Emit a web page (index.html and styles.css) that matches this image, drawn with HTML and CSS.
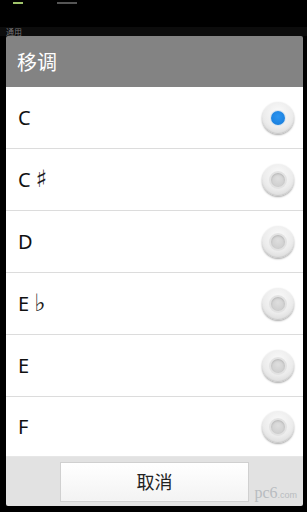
FILE: index.html
```html
<!DOCTYPE html>
<html>
<head>
<meta charset="utf-8">
<link rel="stylesheet" href="styles.css">
</head>
<body>
<div class="status">
  <span class="sig green"></span>
  <span class="sig grey"></span>
</div>
<div class="behind"><span>通用</span></div>
<div class="dialog">
  <div class="title">移调</div>
  <div class="list">
    <div class="row"><span class="label">C</span><span class="radio on"><span class="dot"></span></span></div>
    <div class="row"><span class="label">C <span class="acc">&#9839;&#xFE0E;</span></span><span class="radio"><span class="dot"></span></span></div>
    <div class="row"><span class="label">D</span><span class="radio"><span class="dot"></span></span></div>
    <div class="row"><span class="label">E <span class="acc">&#9837;&#xFE0E;</span></span><span class="radio"><span class="dot"></span></span></div>
    <div class="row"><span class="label">E</span><span class="radio"><span class="dot"></span></span></div>
    <div class="row last"><span class="label">F</span><span class="radio"><span class="dot"></span></span></div>
  </div>
  <div class="footer">
    <div class="btn">取消</div>
    <div class="mark">pc6<small>.com</small></div>
  </div>
</div>
</body>
</html>
```
FILE: styles.css
```css
html, body {
  margin: 0;
  padding: 0;
  background: #000;
  width: 307px;
  height: 512px;
  overflow: hidden;
  font-family: "Noto Sans", "Noto Sans CJK SC", sans-serif;
}
.status {
  height: 27px;
  display: flex;
  align-items: flex-start;
  padding-top: 2px;
  box-sizing: border-box;
}
.sig {
  height: 2px;
  display: block;
}
.green {
  width: 10px;
  margin-left: 13px;
  background: #9fc36a;
}
.grey {
  width: 20px;
  margin-left: 34px;
  background: #555;
}
.behind {
  height: 9px;
  background: #0c0c0c;
  overflow: hidden;
  padding-left: 6px;
}
.behind span {
  display: block;
  font-size: 8px;
  line-height: 9px;
  color: #777;
}
.dialog {
  margin-left: 6px;
  width: 297px;
  display: flex;
  flex-direction: column;
}
.title {
  height: 51px;
  background: #838383;
  color: #fff;
  font-size: 20px;
  line-height: 53px;
  padding-left: 11px;
  border-radius: 2px 2px 0 0;
}
.list {
  background: #fff;
}
.row {
  height: 61px;
  border-bottom: 1px solid #dcdcdc;
  display: flex;
  align-items: center;
  justify-content: space-between;
  padding: 0 9px 0 12px;
}
.row.last {
  height: 59px;
  border-bottom: 1px solid #e6e6e6;
}
.label {
  font-size: 20px;
  line-height: 28px;
  color: #111;
}
.acc {
  font-family: "DejaVu Sans", sans-serif;
  font-size: 24px;
  line-height: 20px;
  color: #1a1a1a;
}
.radio {
  width: 32px;
  height: 32px;
  border-radius: 50%;
  background: radial-gradient(circle at 50% 35%, #fbfbfb 0%, #ececec 55%, #cfcfcf 100%);
  box-shadow: 0 1px 2px rgba(0,0,0,0.35), inset 0 -1px 1px rgba(0,0,0,0.1);
  display: flex;
  align-items: center;
  justify-content: center;
}
.dot {
  width: 14px;
  height: 14px;
  border-radius: 50%;
  background: radial-gradient(circle at 50% 40%, #dedede, #c9c9c9);
  box-shadow: inset 0 1px 2px rgba(0,0,0,0.15), 0 0 0 2px #e2e2e2;
}
.radio.on .dot {
  background: radial-gradient(circle at 50% 40%, #2c95f0, #1479d9);
  box-shadow: 0 0 0 1px #d8e4ee;
}
.footer {
  height: 49px;
  background: #e2e2e2;
  display: flex;
  align-items: center;
  padding-left: 54px;
  border-radius: 0 0 2px 2px;
  position: relative;
}
.btn {
  width: 189px;
  height: 40px;
  box-sizing: border-box;
  border: 1px solid #d0d0d0;
  background: linear-gradient(#ffffff, #f3f3f3);
  text-align: center;
  line-height: 38px;
  font-size: 18px;
  color: #222;
}
.mark {
  position: absolute;
  right: 6px;
  bottom: 4px;
  font-family: "Liberation Serif", serif;
  font-size: 16px;
  color: #b8bcc0;
}
.mark small {
  font-size: 9px;
  font-family: "Liberation Sans", sans-serif;
}
```
